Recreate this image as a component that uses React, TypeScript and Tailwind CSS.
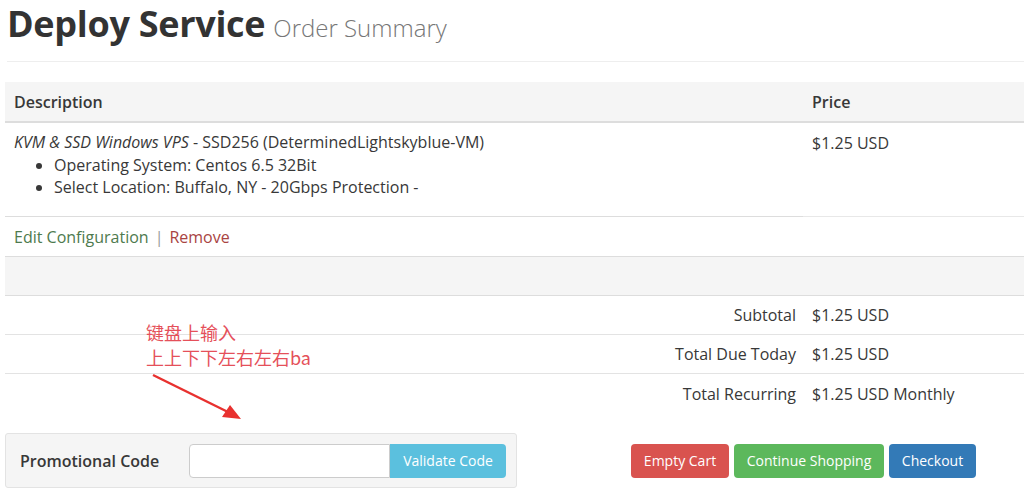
const font = { fontFamily: '"Open Sans", "Noto Sans CJK SC", sans-serif' };

function SummaryRow({ label, value, last }: { label: string; value: string; last?: boolean }) {
  return (
    <div className={"flex h-[39px] items-center " + (last ? "" : "border-b border-[#e3e3e3]")}>
      <div className="w-[807px] pr-[16px] text-right">{label}</div>
      <div>{value}</div>
    </div>
  );
}

export default function App() {
  return (
    <div
      className="relative h-[498px] w-[1024px] overflow-hidden bg-white text-[16px] text-[#383838]"
      style={font}
    >
      {/* 标题 */}
      <div className="flex items-baseline gap-[8px] pl-[7px] pt-[2px]">
        <h1 className="text-[36px] font-bold leading-[44px] tracking-[-0.3px] text-[#333]">
          Deploy Service
        </h1>
        <span className="text-[24px] font-light text-[#777]">Order Summary</span>
      </div>
      <div className="ml-[7px] mt-[15px] border-t border-[#eee]" />

      {/* 订单表格 */}
      <div className="ml-[5px] mt-[20px]">
        <div className="flex h-[41px] items-center border-b-2 border-[#ddd] bg-[#f5f5f5] font-semibold">
          <div className="w-[807px] pl-[9px]">Description</div>
          <div>Price</div>
        </div>

        <div className="flex h-[94px]">
          <div className="w-[798px] border-b border-[#ddd] pl-[9px] pt-[8px] leading-[22.5px]">
            <div>
              <em>KVM &amp; SSD Windows VPS</em> - SSD256 (DeterminedLightskyblue-VM)
            </div>
            <ul className="list-disc pl-[40px]">
              <li>Operating System: Centos 6.5 32Bit</li>
              <li>Select Location: Buffalo, NY - 20Gbps Protection -</li>
            </ul>
          </div>
          <div className="flex-1 border-b border-[#e8e8e8] pl-[9px] pt-[8px]">$1.25 USD</div>
        </div>

        <div className="flex h-[40px] items-center border-b border-[#ddd] pl-[9px]">
          <span className="text-[#4e7a4e]">Edit Configuration</span>
          <span className="mx-[6px] text-[#999]">|</span>
          <span className="text-[#a94442]">Remove</span>
        </div>
        <div className="h-[39px] border-b border-[#ddd] bg-[#f5f5f5]" />

        <SummaryRow label="Subtotal" value="$1.25 USD" />
        <SummaryRow label="Total Due Today" value="$1.25 USD" />
        <SummaryRow label="Total Recurring" value="$1.25 USD Monthly" last />
      </div>

      {/* 优惠码和按钮 */}
      <div className="mt-[20px] flex items-center">
        <div className="ml-[5px] flex h-[55px] w-[512px] items-center rounded-[3px] border border-[#e3e3e3] bg-[#f5f5f5] pl-[14px]">
          <span className="w-[169px] font-semibold">Promotional Code</span>
          <div className="flex h-[34px]">
            <input className="w-[201px] rounded-l-[4px] border border-[#ccc] bg-white outline-none" />
            <button className="w-[116px] rounded-r-[4px] bg-[#5bc0de] text-[14px] text-white">
              Validate Code
            </button>
          </div>
        </div>
        <div className="ml-[114px] flex gap-[5px] text-[14px]">
          <button className="h-[34px] w-[98px] rounded-[4px] bg-[#d9534f] text-white">Empty Cart</button>
          <button className="h-[34px] w-[150px] rounded-[4px] bg-[#5cb85c] text-white">Continue Shopping</button>
          <button className="h-[34px] w-[87px] rounded-[4px] bg-[#337ab7] text-white">Checkout</button>
        </div>
      </div>

      {/* 注释 */}
      <div
        className="absolute left-[146px] top-[320px] text-[18px] leading-[25px] text-[#e5505a]"
        style={{ fontFamily: '"Noto Sans CJK SC", sans-serif' }}
      >
        <div>键盘上输入</div>
        <div>上上下下左右左右ba</div>
      </div>
      <svg className="absolute left-[150px] top-[371px]" width="100" height="55" viewBox="0 0 100 55">
        <line x1="3" y1="4" x2="80" y2="42" stroke="#e8312f" strokeWidth="2.5" />
        <polygon points="91,48 72,46 80,34" fill="#e8312f" />
      </svg>
    </div>
  );
}
